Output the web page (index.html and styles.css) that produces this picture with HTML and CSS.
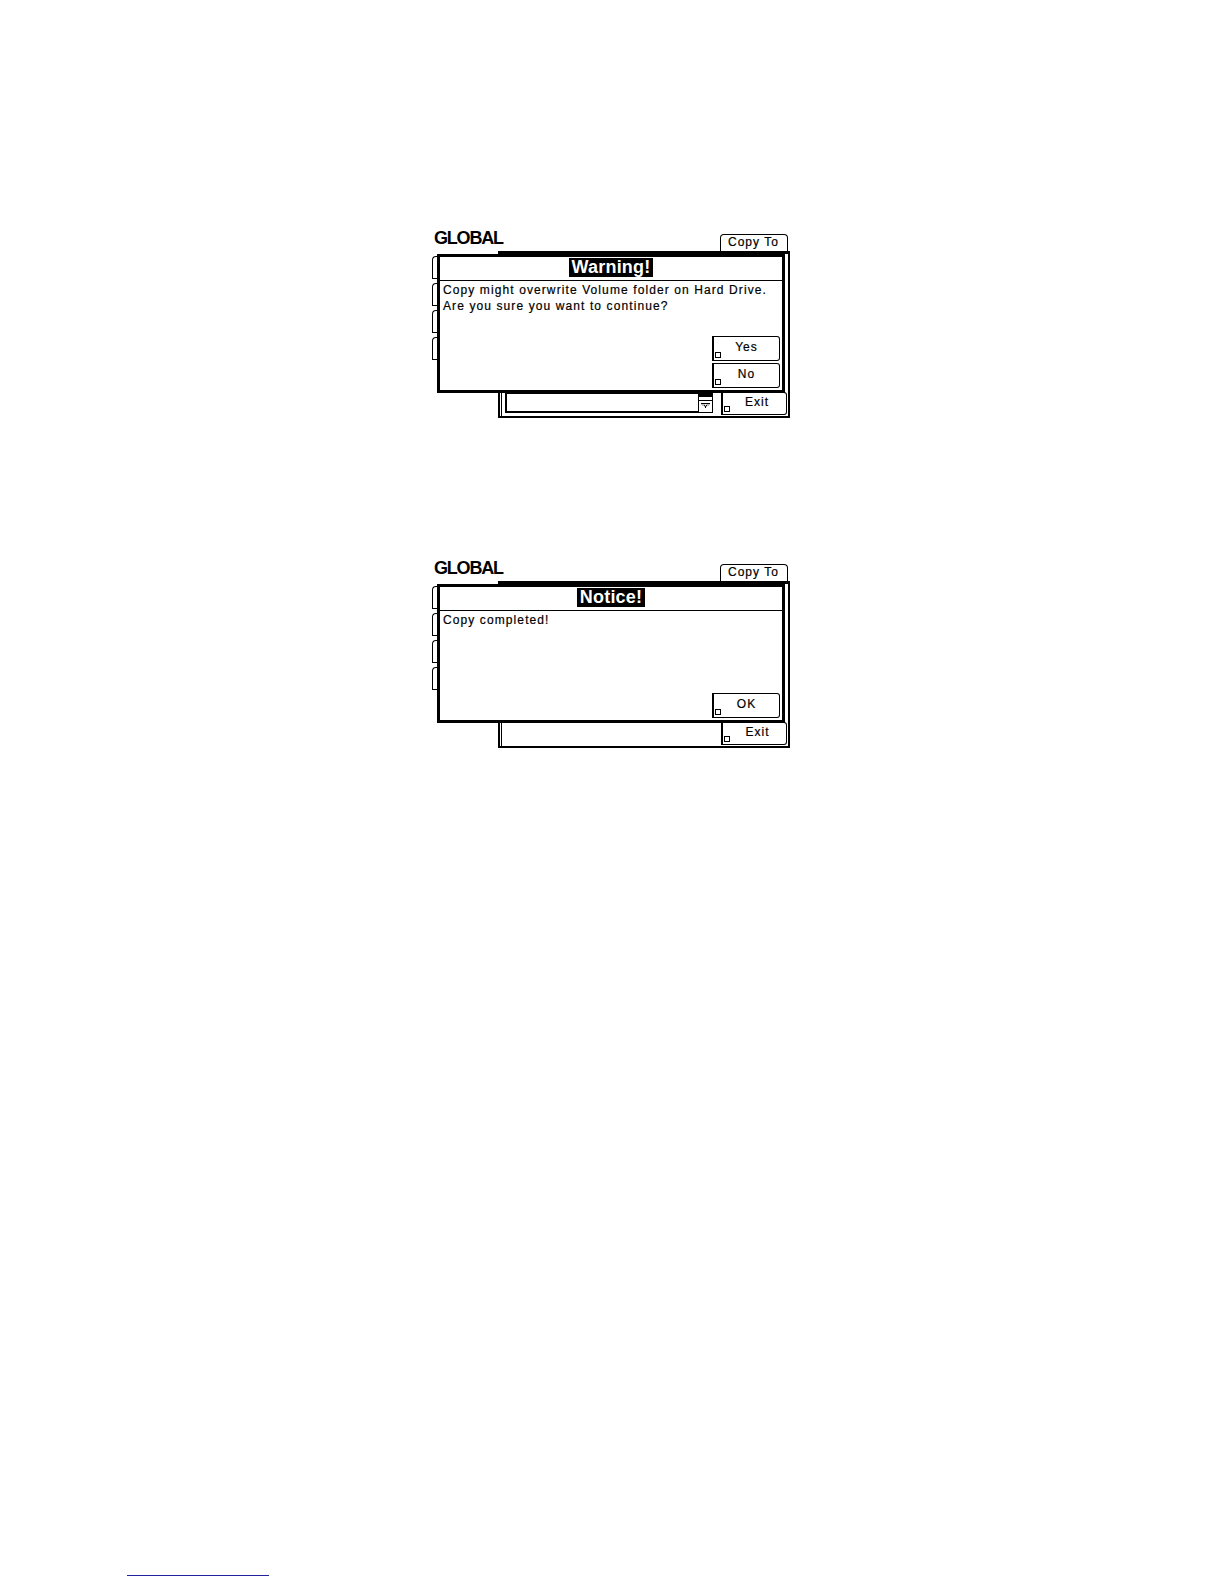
FILE: index.html
```html
<!DOCTYPE html>
<html lang="en">
<head>
<meta charset="utf-8">
<title>Global – Copy To dialogs</title>
<link rel="stylesheet" href="styles.css">
</head>
<body>
<main class="page">
  <section class="screen">
    <div class="screen-head">
      <span class="screen-title">GLOBAL</span>
      <span class="tab-top">Copy To</span>
    </div>
    <div class="screen-main">
      <div class="side-tabs">
        <span class="side-tab"></span>
        <span class="side-tab"></span>
        <span class="side-tab"></span>
        <span class="side-tab"></span>
      </div>
      <div class="panel">
        <div class="panel-row">
          <div class="field"></div>
          <div class="dropdown">
            <svg width="15" height="20" viewBox="0 0 15 20" aria-hidden="true">
              <rect x="0.5" y="0.5" width="14" height="19" fill="#fff" stroke="#000"/>
              <rect x="0" y="0" width="15" height="4" fill="#000"/>
              <line x1="0" y1="7.5" x2="15" y2="7.5" stroke="#000"/>
              <path d="M3 10.5 H12 M4 11.5 L5 12.5 M6 11.5 L7.5 14 L9 11.5 M11 11.5 L10 12.5 M7.5 14 V15" stroke="#000" stroke-width="1" fill="none"/>
            </svg>
          </div>
          <div class="btn btn-exit">Exit</div>
        </div>
      </div>
    </div>
    <div class="dialog">
      <div class="dialog-title"><span class="dialog-title-text">Warning!</span></div>
      <div class="dialog-body">
        <p class="dialog-text">Copy might overwrite Volume folder on Hard Drive.<br>Are you sure you want to continue?</p>
        <div class="dialog-actions">
          <div class="btn btn-dialog">Yes</div>
          <div class="btn btn-dialog">No</div>
        </div>
      </div>
    </div>
  </section>

  <section class="screen screen-second">
    <div class="screen-head">
      <span class="screen-title">GLOBAL</span>
      <span class="tab-top">Copy To</span>
    </div>
    <div class="screen-main">
      <div class="side-tabs">
        <span class="side-tab"></span>
        <span class="side-tab"></span>
        <span class="side-tab"></span>
        <span class="side-tab"></span>
      </div>
      <div class="panel">
        <div class="panel-row">
          <div class="btn btn-exit btn-exit-only">Exit</div>
        </div>
      </div>
    </div>
    <div class="dialog">
      <div class="dialog-title"><span class="dialog-title-text">Notice!</span></div>
      <div class="dialog-body">
        <p class="dialog-text">Copy completed!</p>
        <div class="dialog-actions">
          <div class="btn btn-dialog">OK</div>
        </div>
      </div>
    </div>
  </section>

  <div class="footnote-rule"></div>
</main>
</body>
</html>
```

FILE: styles.css
```css
* {
  box-sizing: border-box;
}

html, body {
  margin: 0;
  padding: 0;
  background: #fff;
}

body {
  font-family: "Liberation Sans", Arial, sans-serif;
  color: #000;
}

.page {
  padding-top: 228px;
  width: 1224px;
  height: 1584px;
  overflow: hidden;
}

.screen {
  position: relative;
  margin-left: 432px;
  width: 360px;
  height: 192px;
}

.screen-second {
  margin-top: 138px;
}

/* header row */
.screen-head {
  display: flex;
  height: 23px;
}

.screen-title {
  margin: 2px 0 0 2px;
  font-size: 18px;
  font-weight: bold;
  line-height: 17px;
  letter-spacing: -1.2px;
}

.tab-top {
  margin-left: auto;
  margin-right: 4px;
  align-self: flex-end;
  width: 68px;
  height: 17px;
  padding-left: 7px;
  border: 1px solid #000;
  border-left-width: 1.5px;
  border-bottom: none;
  border-radius: 4px 4px 0 0;
  font-size: 12px;
  line-height: 14px;
  letter-spacing: 1px;
  white-space: nowrap;
  -webkit-text-stroke: 0.2px #000;
}

/* background screen */
.screen-main {
  display: flex;
  align-items: flex-start;
}

.side-tabs {
  display: flex;
  flex-direction: column;
  gap: 4px;
  width: 8px;
  margin-top: 5px;
}

.side-tab {
  display: block;
  height: 23px;
  border: 1px solid #000;
  border-right: none;
  border-radius: 4px 0 0 0;
}

.panel {
  display: flex;
  flex-direction: column;
  justify-content: flex-end;
  margin-left: 58px;
  width: 292px;
  height: 167px;
  border-top: 3px solid #000;
  border-right: 2px solid #000;
  border-bottom: 2px solid #000;
  border-left: 2px solid #000;
}

.panel-row {
  display: flex;
  align-items: flex-end;
  height: 24px;
  margin-left: 1px;
  border-left: 1.5px solid #000;
}

.field {
  width: 193px;
  height: 20px;
  margin-left: 2.5px;
  margin-bottom: 3px;
  border-top: 1px solid #000;
  border-left: 2px solid #000;
  border-bottom: 2px solid #000;
}

.dropdown {
  width: 15px;
  height: 20px;
  margin-bottom: 3px;
}

.dropdown svg {
  display: block;
}

.btn {
  position: relative;
  border: 1px solid #000;
  border-left-width: 2px;
  border-radius: 0 3px 3px 0;
  background: #fff;
  font-size: 12px;
  letter-spacing: 1px;
  text-align: center;
  -webkit-text-stroke: 0.2px #000;
}

.btn::before {
  content: "";
  position: absolute;
  left: 1px;
  bottom: 2px;
  width: 4px;
  height: 4px;
  border: 1px solid #000;
}

.btn-exit {
  width: 66px;
  height: 23px;
  margin-left: 8px;
  margin-bottom: 1px;
  line-height: 19px;
  padding-left: 6px;
}

.btn-exit-only {
  margin-left: auto;
  margin-right: 1px;
}

/* dialog overlay */
.dialog {
  position: absolute;
  left: 5px;
  top: 26px;
  width: 348px;
  height: 139px;
  display: flex;
  flex-direction: column;
  border: 3px solid #000;
  background: #fff;
}

.dialog-title {
  display: flex;
  justify-content: center;
  align-items: flex-start;
  height: 24px;
  border-bottom: 1px solid #000;
}

.dialog-title-text {
  margin-top: 1px;
  padding: 0 3px;
  height: 19px;
  background: #000;
  color: #fff;
  font-size: 18px;
  font-weight: bold;
  line-height: 19px;
  letter-spacing: 0.2px;
}

.dialog-body {
  flex: 1;
  display: flex;
  flex-direction: column;
}

.dialog-text {
  margin: 0;
  padding: 1px 3px 0;
  font-size: 12px;
  line-height: 16px;
  letter-spacing: 1.1px;
  white-space: nowrap;
  -webkit-text-stroke: 0.2px #000;
}

.dialog-actions {
  margin-top: auto;
  align-self: flex-end;
  display: flex;
  flex-direction: column;
  gap: 2px;
  padding: 0 2px 2px 0;
}

.btn-dialog {
  width: 68px;
  height: 25px;
  line-height: 21px;
}

.footnote-rule {
  margin-top: 825px;
  margin-left: 127px;
  width: 142px;
  height: 1px;
  background: #22229a;
}
```
